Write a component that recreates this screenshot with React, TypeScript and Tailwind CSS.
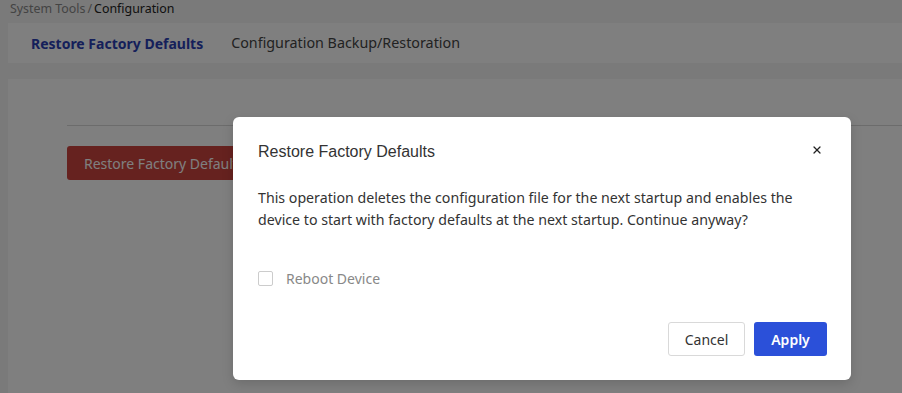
import React, { useState } from 'react';
import { X } from 'lucide-react';

const font = { fontFamily: '"Noto Sans", "Open Sans", sans-serif' };
const titleFont = { fontFamily: '"Liberation Sans", Arial, sans-serif' };

const App = () => {
  const [reboot, setReboot] = useState(false);

  return (
    <div className="relative h-[393px] w-[902px] overflow-hidden bg-[#f4f4f4]" style={font}>
      {/* Breadcrumb */}
      <div className="flex h-[17px] items-center px-[10px] pt-px text-[12.4px] leading-none">
        <span className="text-[#888]">System Tools</span>
        <span className="mx-[2px] text-[#888]">/</span>
        <span className="text-[#222]">Configuration</span>
      </div>

      {/* Tabs */}
      <div className="ml-[8px] mt-[6px] flex h-[40px] items-center gap-[28px] bg-white px-[23px] text-[14px]">
        <span className="font-bold text-[#2a3fb5]">Restore Factory Defaults</span>
        <span className="text-[14.3px] text-[#444]">Configuration Backup/Restoration</span>
      </div>

      {/* Content */}
      <div className="ml-[8px] mt-[16px] h-[320px] bg-white pl-[59px] pt-[46px]">
        <div className="h-px bg-[#d9d9d9]" />
        <button className="mt-[20px] h-[34px] rounded-[3px] bg-[#cc443e] px-[17px] text-[14px] text-white">
          Restore Factory Defaults
        </button>
      </div>

      {/* Overlay */}
      <div className="absolute inset-0 bg-black/50" />

      {/* Dialog */}
      <div className="absolute left-[233px] top-[117px] flex h-[263px] w-[618px] flex-col rounded-[6px] bg-white pl-[25px] pr-[24px] shadow-[0_4px_12px_rgba(0,0,0,0.15)]">
        <div className="flex h-[70px] items-center justify-between">
          <span className="text-[16px] text-[#333]" style={titleFont}>Restore Factory Defaults</span>
          <X size={12} strokeWidth={2.5} className="mr-[4px] mb-[4px] text-[#222]" />
        </div>
        <p className="text-[14.2px] leading-[22px] text-[#333]">
          This operation deletes the configuration file for the next startup and enables the device to start with factory defaults at the next startup. Continue anyway?
        </p>
        <label className="mt-[35px] flex items-center gap-[13px] text-[14px] leading-[22px] text-[#888]">
          <input
            type="checkbox"
            checked={reboot}
            onChange={(e) => setReboot(e.target.checked)}
            className="h-[15px] w-[15px] appearance-none rounded-[2px] border border-[#ccc] bg-white"
          />
          <span className="mt-[2px]">Reboot Device</span>
        </label>
        <div className="mt-auto mb-[24px] flex justify-end gap-[9px]">
          <button className="h-[34px] w-[77px] rounded-[3px] border border-[#d9d9d9] bg-white text-[14px] text-[#333]">
            Cancel
          </button>
          <button className="h-[34px] w-[73px] rounded-[3px] bg-[#2b50d9] text-[14px] font-semibold text-white">
            Apply
          </button>
        </div>
      </div>
    </div>
  );
};

export default App;
